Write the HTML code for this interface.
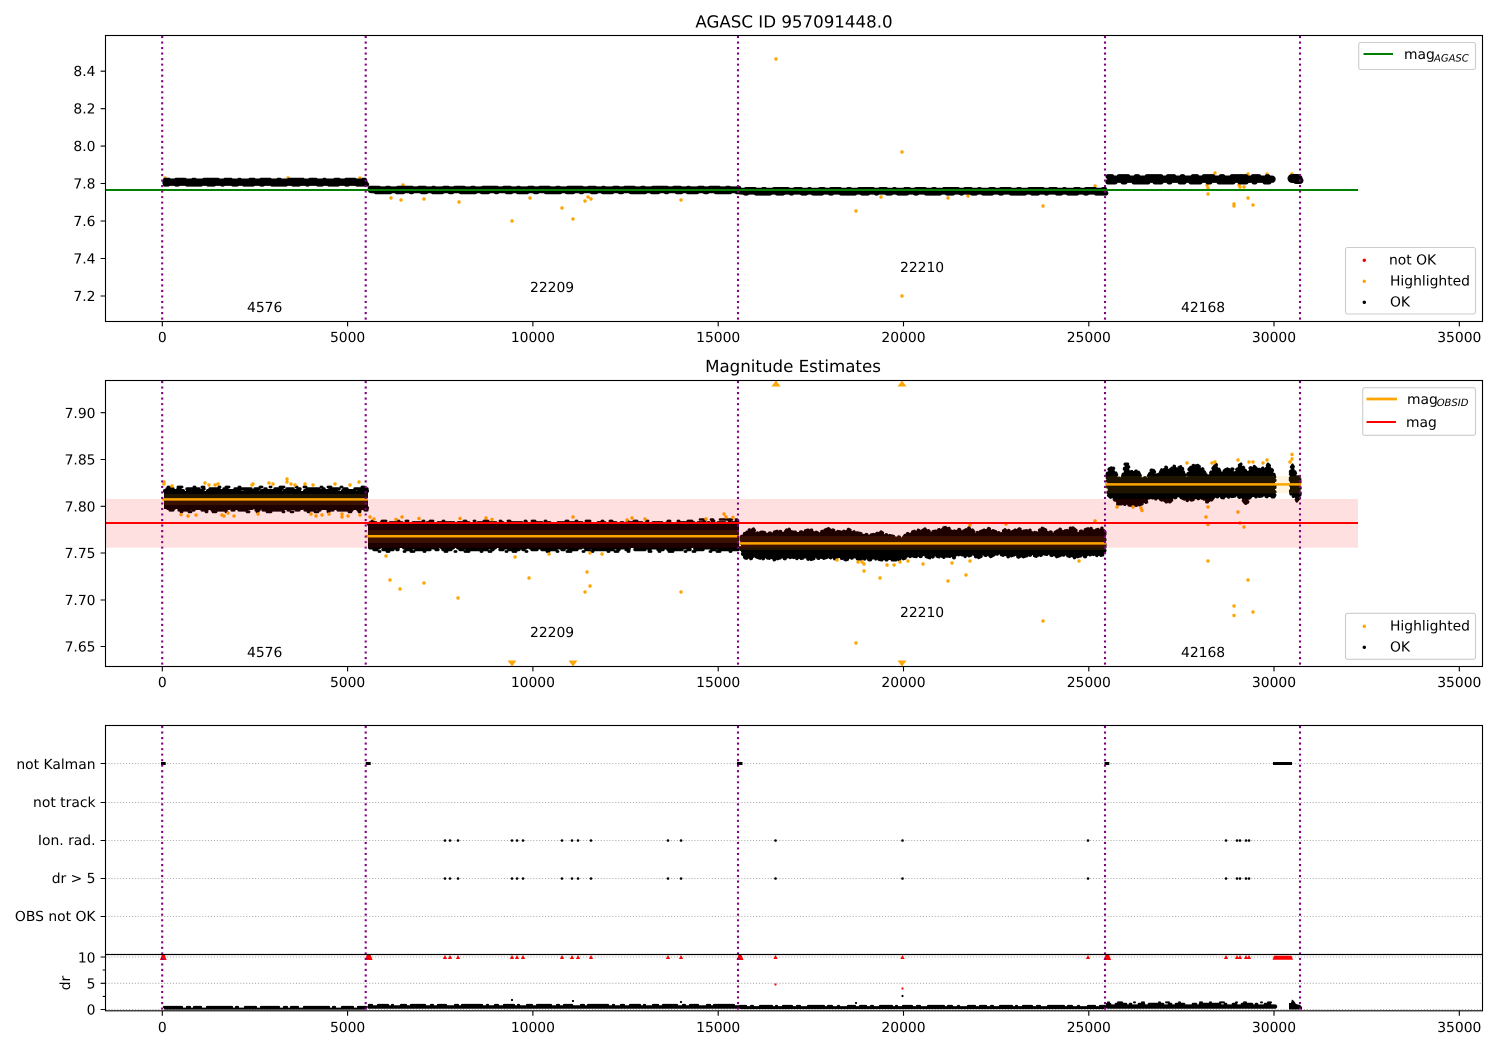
<!DOCTYPE html>
<html lang="en">
<head>
<meta charset="utf-8">
<title>AGASC ID 957091448.0</title>
<style>
html,body{margin:0;padding:0;background:#fff}
svg{display:block}
text{font-family:"DejaVu Sans","Liberation Sans",sans-serif;font-size:13.89px;fill:#000;text-rendering:geometricPrecision}
.t{font-size:16.67px;text-anchor:middle}
.x{text-anchor:middle}
.y{text-anchor:end}
.s{font-size:10px;font-style:italic}
.k{fill:none;stroke:#000;stroke-linecap:round;stroke-linejoin:round}
.a{stroke-dasharray:6 5 2 7 12 4 1 6 9 5 3 8 16 4 4 6 1 9 7 5}
.b{stroke-dasharray:3 6 10 4 1 8 5 5 14 6 2 5 8 9 3 4 20 5 1 7}
.c{stroke-dasharray:1 9 4 12 1 7 2 15 1 6 3 10 1 20 2 8}
.d{stroke-dasharray:18 5 3 4 7 6 25 4 2 7 11 5}
.e{stroke-dasharray:4 7 9 8 2 9 14 7 6 8 1 10}
.j{stroke-dasharray:1 4 3 3 .5 5 2 4 .5 3 4 5}
.o{fill:none;stroke:#ffa500;stroke-width:3.4;stroke-linecap:round}
.v{fill:none;stroke:#800080;stroke-width:2.08;stroke-dasharray:2.08 3.44}
.g{fill:none;stroke:#b0b0b0;stroke-width:1.1;stroke-dasharray:1.1 1.83}
.f{fill:none;stroke:#000;stroke-width:1.1}
.l{fill:#fff;fill-opacity:.8;stroke:#ccc;stroke-width:1.1}
</style>
</head>
<body>
<svg xmlns="http://www.w3.org/2000/svg" width="1500" height="1050" viewBox="0 0 1500 1050">
<rect width="1500" height="1050" fill="#fff"/>

<!-- ============ PANEL 1 ============ -->
<text class="t" x="794" y="27.5">AGASC ID 957091448.0</text>
<path class="o" d="M776 59h.01M902 152h.01M902 296h.01M391 198h.01M401 200h.01M424 199h.01M459 202h.01M512 221h.01M530 198h.01M562 208h.01M573 219h.01M585 201h.01M588 197h.01M591 199h.01M681 200h.01M856 211h.01M881 197h.01M1043 206h.01M948 198h.01M968 196h.01M1207 185h.01M1208 188h.01M1208 194h.01M1234 204h.01M1234 206h.01M1239 185h.01M1240 187h.01M1244 187h.01M1248 198h.01M1253 205h.01M165 178h.01M288 178h.01M360 178h.01M403 185h.01M1095 186h.01M1215 173h.01M1248 174h.01M1267 174h.01M1292 174h.01"/>
<g class="k">
<path d="M166 182.2H364" stroke-width="7.4"/>
<path class="e" d="M165 180H367" stroke-width="4.4"/>
<path class="e" style="stroke-dashoffset:17" d="M165 184.4H367" stroke-width="4.4"/>
<path d="M371 189.8H736" stroke-width="6.8"/>
<path class="e" style="stroke-dashoffset:9" d="M368 188H739" stroke-width="4.6"/>
<path class="e" style="stroke-dashoffset:31" d="M368 191.8H739" stroke-width="5"/>
<path d="M741 191.2H1104" stroke-width="6.8"/>
<path class="e" style="stroke-dashoffset:5" d="M740 189.2H1106" stroke-width="4.4"/>
<path class="e" style="stroke-dashoffset:23" d="M740 193.2H1106" stroke-width="4.8"/>
<path d="M1111 179.2H1272" stroke-width="7.4"/>
<path class="e" d="M1108 176.6H1275" stroke-width="5"/>
<path class="e" style="stroke-dashoffset:13" d="M1108 181.8H1276" stroke-width="5.4"/>
<path d="M1292 178.5H1298" stroke-width="9"/>
<path d="M1296 180.5H1300" stroke-width="7"/>
</g>
<path d="M105.5 190H1358" fill="none" stroke="#008000" stroke-width="2.1"/>
<g class="v">
<path d="M162.2 36V321"/><path d="M365.7 36V321"/><path d="M738 36V321"/><path d="M1105 36V321"/><path d="M1300 36V321"/>
</g>
<rect class="f" x="105.5" y="35.5" width="1377" height="286"/>
<path class="f" d="M100.6 71.2h4.9M100.6 108.7h4.9M100.6 146.1h4.9M100.6 183.5h4.9M100.6 221h4.9M100.6 258.5h4.9M100.6 296h4.9M162.3 321.5v4.9M347.6 321.5v4.9M532.9 321.5v4.9M718.2 321.5v4.9M903.5 321.5v4.9M1088.8 321.5v4.9M1274 321.5v4.9M1459.3 321.5v4.9"/>
<text class="y" x="95.5" y="76">8.4</text>
<text class="y" x="95.5" y="113.5">8.2</text>
<text class="y" x="95.5" y="151">8.0</text>
<text class="y" x="95.5" y="188.4">7.8</text>
<text class="y" x="95.5" y="225.9">7.6</text>
<text class="y" x="95.5" y="263.4">7.4</text>
<text class="y" x="95.5" y="300.8">7.2</text>
<text class="x" x="162.3" y="342">0</text>
<text class="x" x="347.6" y="342">5000</text>
<text class="x" x="532.9" y="342">10000</text>
<text class="x" x="718.2" y="342">15000</text>
<text class="x" x="903.5" y="342">20000</text>
<text class="x" x="1088.8" y="342">25000</text>
<text class="x" x="1274" y="342">30000</text>
<text class="x" x="1459.3" y="342">35000</text>
<text x="247" y="312">4576</text>
<text x="530" y="292">22209</text>
<text x="900" y="272">22210</text>
<text x="1181" y="312">42168</text>
<rect class="l" x="1358.7" y="42.5" width="116.8" height="27" rx="2"/>
<path d="M1363.5 54H1393" fill="none" stroke="#008000" stroke-width="2.1"/>
<text x="1404" y="59">mag</text><text class="s" x="1434" y="61.5">AGASC</text>
<rect class="l" x="1345.5" y="247.5" width="130" height="66.5" rx="2"/>
<circle cx="1364.3" cy="260.3" r="1.7" fill="#f00"/>
<circle cx="1364.3" cy="281.3" r="1.7" fill="#ffa500"/>
<circle cx="1364.3" cy="302.3" r="1.7" fill="#000"/>
<text x="1389" y="264.5">not OK</text>
<text x="1390" y="285.5">Highlighted</text>
<text x="1390" y="306.5">OK</text>

<!-- ============ PANEL 2 ============ -->
<text class="t" x="793" y="372">Magnitude Estimates</text>
<g class="k">
<!-- seg 1 -->
<rect x="164" y="491" width="204" height="18" fill="#000" stroke="none"/>
<path class="d" d="M165 491H367" stroke-width="4"/>
<path class="a" d="M167 489H367" stroke-width="3.4"/>
<path class="c" d="M168 487H367" stroke-width="2.8"/>
<path class="d" style="stroke-dashoffset:31" d="M168 508H367" stroke-width="4"/>
<path class="b" d="M170 510H367" stroke-width="3.2"/>
<path class="c" style="stroke-dashoffset:17" d="M172 511.8H366" stroke-width="2.8"/>
<!-- seg 2 -->
<rect x="368" y="524" width="371" height="24" fill="#000" stroke="none"/>
<path class="d" d="M369 524H738" stroke-width="4"/>
<path class="a" d="M370 522.6H738" stroke-width="3"/>
<path class="c" d="M372 521H738" stroke-width="2.8"/>
<path class="d" style="stroke-dashoffset:9" d="M370 547.5H738" stroke-width="4"/>
<path class="b" d="M374 549.5H738" stroke-width="3.4"/>
<path class="c" style="stroke-dashoffset:23" d="M376 551.5H736" stroke-width="2.8"/>
<path d="M700 519.5H737" class="a" stroke-width="2.6"/>
<!-- seg 3 -->
<polygon class="j" fill="#000" stroke-width="3" points="741,537 743,534 746,533 750,529 753,528 756,533 762,532 770,533 778,531 785,532 788,528 792,532 800,532 808,530 812,530 818,533 825,530 830,528 835,531 842,532 848,529 852,531 858,533 864,534 870,535 876,534 880,531 884,534 892,536 900,537 903,538 906,534 912,532 918,530 922,531 926,528 930,532 936,531 942,528 948,527 952,532 958,529 964,531 970,527 975,533 982,531 988,528 994,531 1000,533 1006,529 1012,532 1018,528 1024,531 1030,530 1036,533 1042,528 1048,531 1054,533 1060,529 1066,531 1072,527 1078,532 1084,530 1090,528 1096,530 1102,528 1105,532 1105,552 1103,555 1098,556 1092,554 1086,557 1080,556 1074,558 1068,556 1062,555 1056,557 1050,555 1044,554 1038,557 1032,555 1026,556 1020,558 1014,555 1008,557 1002,555 996,554 990,557 984,555 978,558 972,555 966,557 960,554 954,558 948,556 942,558 936,556 930,558 924,556 918,557 912,556 906,558 900,560 894,560 888,560 882,560 876,559 870,560 864,559 858,559 852,558 846,560 840,558 834,559 828,557 822,559 816,558 810,560 804,558 798,559 792,557 786,559 780,558 774,560 768,558 762,559 756,557 750,559 745,558 743,555 741,552"/>
<!-- seg 4 -->
<polygon class="j" fill="#000" stroke-width="3" points="1107,474 1109,469 1113,467 1116,473 1118,478 1122,478 1124,471 1125,464 1128,464 1130,472 1133,471 1138,471 1141,477 1147,478 1150,473 1152,468 1154,471 1156,474 1159,475 1162,469 1166,467 1170,470 1174,466 1178,468 1182,466 1184,474 1187,477 1189,469 1192,466 1196,464 1200,467 1203,469 1206,475 1210,474 1213,468 1216,464 1219,469 1221,474 1225,470 1229,468 1233,469 1235,474 1238,466 1241,464 1244,468 1247,473 1250,468 1254,466 1258,470 1262,467 1265,471 1268,464 1271,467 1274,474 1275,478 1275,495 1274,497 1268,497 1262,496 1256,497 1250,497 1247,504 1245,503 1241,498 1236,496 1230,497 1224,498 1218,497 1214,497 1210,502 1206,502 1203,498 1197,499 1192,500 1188,501 1184,499 1180,497 1174,498 1170,502 1164,502 1160,499 1155,499 1150,497 1147,502 1142,504 1138,505.5 1132,505.5 1128,505 1122,504 1117,504 1114,499 1110,497 1108,495"/>
<polygon class="j" fill="#000" stroke-width="2.4" points="1290,472 1291,467 1293,464 1295,471 1297,476 1300,477 1300.5,484 1300.5,494 1299,501 1297,502 1295,498 1292,496 1290.5,494 1290,490"/>
</g>
<path class="o" d="M164 482h.01M164 484h.01M172 486h.01M205 483h.01M209 485h.01M215 485h.01M218 484h.01M252 485h.01M253 484h.01M269 483h.01M273 484h.01M287 479h.01M287 482h.01M291 484h.01M295 485h.01M305 484h.01M313 485h.01M335 484h.01M350 485h.01M359 482h.01M181 514.6h.01M188 516h.01M196 515h.01M222 515h.01M224 516h.01M228 513h.01M234 516h.01M258 514h.01M311 514h.01M316 516h.01M322 515h.01M329 514h.01M342 517h.01M342 514h.01M348 516h.01M360 515h.01M370 517h.01M374 519h.01M396 519.5h.01M402 517h.01M419 518.5h.01M460 518.5h.01M486 518h.01M492 519.5h.01M573 517h.01M627 520h.01M632 518h.01M645 519h.01M706 519h.01M724 514h.01M726 517h.01M733 517.5h.01M390 580h.01M400 589h.01M424 583h.01M458 598h.01M529 578h.01M587 572h.01M590 586h.01M585 592h.01M681 592h.01M856 643h.01M864 571h.01M880 578h.01M948 581h.01M966 575h.01M1043 621h.01M386 556h.01M515 557h.01M549 554h.01M590 553h.01M602 554h.01M837 560h.01M858 562h.01M864 564h.01M862 562h.01M887 565h.01M894 565h.01M900 562h.01M908 561h.01M923 564h.01M952 563h.01M970 561h.01M1079 561h.01M1208 507h.01M1206 517h.01M1208 524.5h.01M1208 561h.01M1238 512h.01M1240 523h.01M1244 527h.01M1248 580h.01M1234 606h.01M1234 615.5h.01M1253 612h.01M1238 460h.01M1292 454.5h.01M1292 459h.01M1290 462h.01M1267 460h.01M1249 462h.01M1253 462h.01M1215 462h.01M1212 463h.01M1187 463h.01M1263 463h.01M1117 507h.01M1133 507h.01M1141 508h.01M1142 510.5h.01M1095 521h.01M970 525h.01M1006 524h.01"/>
<path d="M507.5 660.5h9l-4.5 6zM568.5 660.5h9l-4.5 6zM897.5 660.5h9l-4.5 6zM771.5 386.5h9l-4.5-6zM897.5 386.5h9l-4.5-6z" fill="#ffa500"/>
<!-- orange bands -->
<g fill="#ffa500" fill-opacity=".12">
<rect x="163" y="494" width="205" height="11"/>
<rect x="366" y="530" width="373" height="13"/>
<rect x="739" y="536" width="367" height="14"/>
<rect x="1105" y="476" width="196" height="17.3"/>
</g>
<!-- pink band -->
<rect x="105.5" y="499" width="1252.5" height="48.7" fill="#f00" fill-opacity=".12"/>
<g fill="none" stroke="#ffa500" stroke-width="2.5">
<path d="M162 499.4H368"/><path d="M366 536.3H739"/><path d="M739 543.4H1106"/><path d="M1105 484.4H1301"/>
</g>
<path d="M105.5 523H1358" fill="none" stroke="#f00" stroke-width="2.1"/>
<g class="v">
<path d="M162.2 381V666"/><path d="M365.7 381V666"/><path d="M738 381V666"/><path d="M1105 381V666"/><path d="M1300 381V666"/>
</g>
<rect class="f" x="105.5" y="380.5" width="1377" height="286"/>
<path class="f" d="M100.6 412.7h4.9M100.6 459.5h4.9M100.6 506.3h4.9M100.6 553h4.9M100.6 600h4.9M100.6 646.5h4.9M162.3 666.5v4.9M347.6 666.5v4.9M532.9 666.5v4.9M718.2 666.5v4.9M903.5 666.5v4.9M1088.8 666.5v4.9M1274 666.5v4.9M1459.3 666.5v4.9"/>
<text class="y" x="95.5" y="418">7.90</text>
<text class="y" x="95.5" y="464.7">7.85</text>
<text class="y" x="95.5" y="511.5">7.80</text>
<text class="y" x="95.5" y="558">7.75</text>
<text class="y" x="95.5" y="605">7.70</text>
<text class="y" x="95.5" y="651.6">7.65</text>
<text class="x" x="162.3" y="687">0</text>
<text class="x" x="347.6" y="687">5000</text>
<text class="x" x="532.9" y="687">10000</text>
<text class="x" x="718.2" y="687">15000</text>
<text class="x" x="903.5" y="687">20000</text>
<text class="x" x="1088.8" y="687">25000</text>
<text class="x" x="1274" y="687">30000</text>
<text class="x" x="1459.3" y="687">35000</text>
<text x="247" y="657">4576</text>
<text x="530" y="637">22209</text>
<text x="900" y="617">22210</text>
<text x="1181" y="657">42168</text>
<rect class="l" x="1362.7" y="387.7" width="112.8" height="47.6" rx="2"/>
<path d="M1366.5 399H1397" fill="none" stroke="#ffa500" stroke-width="2.7"/>
<path d="M1366.5 422H1396" fill="none" stroke="#f00" stroke-width="2.1"/>
<text x="1407" y="404">mag</text><text class="s" x="1436.7" y="406">OBSID</text>
<text x="1406" y="427">mag</text>
<rect class="l" x="1345.5" y="613.3" width="130" height="46" rx="2"/>
<circle cx="1364.3" cy="626.3" r="1.7" fill="#ffa500"/>
<circle cx="1364.3" cy="647.3" r="1.7" fill="#000"/>
<text x="1390" y="630.5">Highlighted</text>
<text x="1390" y="651.5">OK</text>

<!-- ============ PANEL 3 ============ -->
<g class="g">
<path d="M105.5 763.5H1482"/><path d="M105.5 802.5H1482"/><path d="M105.5 840.5H1482"/><path d="M105.5 878.5H1482"/><path d="M105.5 916.5H1482"/>
<path d="M105.5 957H1482"/><path d="M105.5 983.3H1482"/><path d="M105.5 1009.5H1482"/>
</g>
<g fill="#000">
<rect x="161" y="762" width="4.7" height="3"/>
<rect x="365.7" y="762" width="5" height="3"/>
<rect x="737" y="762" width="5.5" height="3"/>
<rect x="1104.5" y="762" width="4.8" height="3"/>
<rect x="1273" y="762" width="19" height="3"/>
</g>
<path fill="none" stroke="#000" stroke-width="2.6" stroke-linecap="round" d="M445 840.5h.01M450 840.5h.01M458 840.5h.01M512 840.5h.01M517 840.5h.01M523 840.5h.01M562 840.5h.01M572 840.5h.01M578 840.5h.01M591 840.5h.01M668 840.5h.01M681 840.5h.01M775.5 840.5h.01M902.5 840.5h.01M1088 840.5h.01M1226 840.5h.01M1237 840.5h.01M1240 840.5h.01M1246 840.5h.01M1249 840.5h.01M445 878.5h.01M450 878.5h.01M458 878.5h.01M512 878.5h.01M517 878.5h.01M523 878.5h.01M562 878.5h.01M572 878.5h.01M578 878.5h.01M591 878.5h.01M668 878.5h.01M681 878.5h.01M775.5 878.5h.01M902.5 878.5h.01M1088 878.5h.01M1226 878.5h.01M1237 878.5h.01M1240 878.5h.01M1246 878.5h.01M1249 878.5h.01"/>

<!-- ============ PANEL 4 ============ -->
<g class="k">
<path d="M165 1008.6H366" stroke-width="2"/>
<path class="d" d="M164 1007H366" stroke-width="2.2"/>
<path d="M369 1007H739" stroke-width="3.6"/>
<path class="b" d="M369 1005H739" stroke-width="2.2"/>
<path d="M741 1007.6H1105" stroke-width="3"/>
<path class="a" d="M740 1006H1105" stroke-width="2.2"/>
<path d="M1108 1006.6H1275" stroke-width="4.4"/>
<path class="b" d="M1107 1004H1275" stroke-width="2.6"/>
<path class="c" d="M1108 1002.4H1274" stroke-width="2"/>
</g>
<path d="M1289 1009V1003L1291 1003 1292 999.5 1294 1001 1296 1004 1300 1005 1302 1007V1009.5H1289z" fill="#000"/>
<path fill="none" stroke="#000" stroke-width="2.2" stroke-linecap="round" d="M512 1000h.01M573 1001h.01M681 1002h.01M902.5 996h.01M856 1003h.01"/>
<path fill="none" stroke="#f00" stroke-width="2.2" stroke-linecap="round" d="M775.5 984.5h.01M902.5 988.5h.01"/>
<path fill="#f00" d="M445 955l2.1 4h-4.2zM450 955l2.1 4h-4.2zM458 955l2.1 4h-4.2zM512 955l2.1 4h-4.2zM517 955l2.1 4h-4.2zM523 955l2.1 4h-4.2zM562 955l2.1 4h-4.2zM572 955l2.1 4h-4.2zM578 955l2.1 4h-4.2zM591 955l2.1 4h-4.2zM668 955l2.1 4h-4.2zM681 955l2.1 4h-4.2zM775.5 955l2.1 4h-4.2zM902.5 955l2.1 4h-4.2zM1088 955l2.1 4h-4.2zM1226 955l2.1 4h-4.2zM1237 955l2.1 4h-4.2zM1240 955l2.1 4h-4.2zM1246 955l2.1 4h-4.2zM1249 955l2.1 4h-4.2zM160 960h6.6l-1.8-5h-3zM364.8 960h7.8l-2-5h-3.8zM736.5 960h7l-2-5h-3zM1103.5 960h7.6l-2-5h-3.6zM1272.5 959.7h20.5l-1.5-4h-17.5z"/>
<g class="v">
<path d="M162.2 726V1010.5"/><path d="M365.7 726V1010.5"/><path d="M738 726V1010.5"/><path d="M1105 726V1010.5"/><path d="M1300 726V1010.5"/>
</g>
<rect class="f" x="105.5" y="725.5" width="1377" height="229"/>
<rect class="f" x="105.5" y="954.5" width="1377" height="56.3"/>
<path class="f" d="M100.6 763.5h4.9M100.6 802.5h4.9M100.6 840.5h4.9M100.6 878.5h4.9M100.6 916.5h4.9M100.6 957h4.9M100.6 983.3h4.9M100.6 1009.5h4.9M102.7 970h2.8M102.7 996.4h2.8M162.3 1010.8v4.9M347.6 1010.8v4.9M532.9 1010.8v4.9M718.2 1010.8v4.9M903.5 1010.8v4.9M1088.8 1010.8v4.9M1274 1010.8v4.9M1459.3 1010.8v4.9"/>
<text class="y" x="95.5" y="768.8">not Kalman</text>
<text class="y" x="95.5" y="807">not track</text>
<text class="y" x="95.5" y="845">Ion. rad.</text>
<text class="y" x="95.5" y="883">dr &gt; 5</text>
<text class="y" x="95.5" y="921">OBS not OK</text>
<text class="y" x="95.5" y="962.3">10</text>
<text class="y" x="95.5" y="988.5">5</text>
<text class="y" x="95.5" y="1014.7">0</text>
<text class="x" transform="rotate(-90 70 983)" x="70" y="983">dr</text>
<text class="x" x="162.3" y="1032">0</text>
<text class="x" x="347.6" y="1032">5000</text>
<text class="x" x="532.9" y="1032">10000</text>
<text class="x" x="718.2" y="1032">15000</text>
<text class="x" x="903.5" y="1032">20000</text>
<text class="x" x="1088.8" y="1032">25000</text>
<text class="x" x="1274" y="1032">30000</text>
<text class="x" x="1459.3" y="1032">35000</text>
</svg>
</body>
</html>
